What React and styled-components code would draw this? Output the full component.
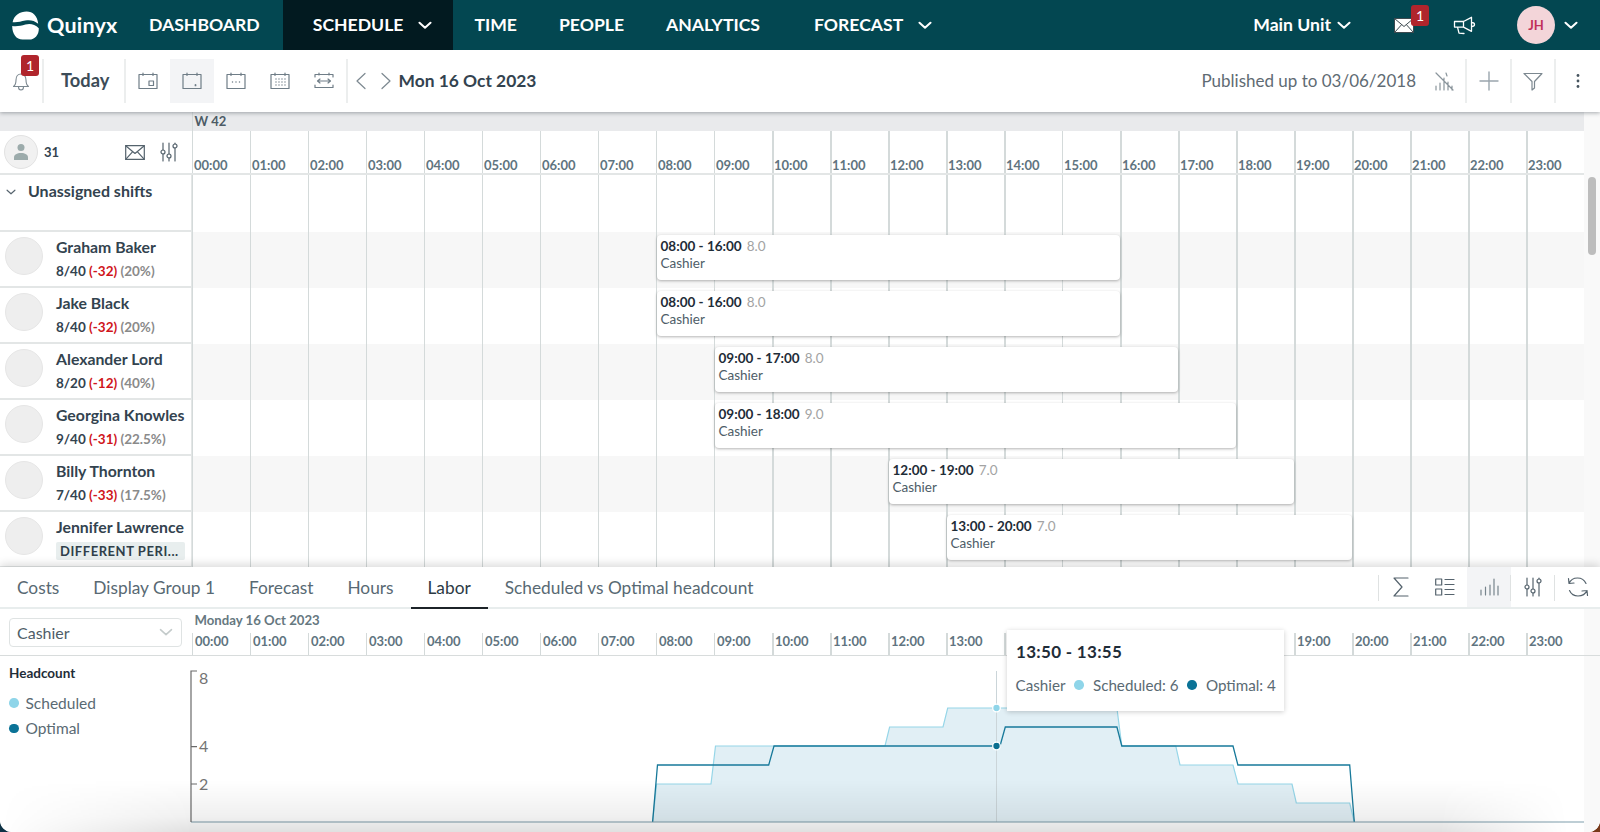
import React from 'react';
import styled, { createGlobalStyle } from 'styled-components';

const FONT = `Lato, "Noto Sans", sans-serif`;
const HOURS = Array.from({ length: 24 }, (_, i) => `${String(i).padStart(2, '0')}:00`);
const LINES = 'repeating-linear-gradient(to right, #d4dada 0 1.5px, transparent 1.5px 58px)';

const Global = createGlobalStyle`
  html, body { margin: 0; padding: 0; background: #fff; }
  * { box-sizing: border-box; }
`;

const Page = styled.div`
  width: 1600px; height: 832px; overflow: hidden;
  display: flex; flex-direction: column;
  font-family: ${FONT}; color: #33434f;
  background: linear-gradient(90deg, #0f3347 50%, #7a3a1a 50%);
`;

/* ---------- top navigation ---------- */
const TopNav = styled.header`
  height: 50px; flex: none; display: flex; align-items: stretch;
  background: #034751; color: #fff; position: relative; z-index: 4;
`;
const Brand = styled.div`
  width: 128px; display: flex; align-items: center; gap: 8px; padding-left: 12px;
`;
const BrandName = styled.span`
  font-size: 21.5px; font-weight: 700; letter-spacing: .2px; margin-bottom: 1px;
`;
const NavItem = styled.div`
  display: flex; align-items: center; gap: 15px;
  padding: 0 ${p => p.$right || 21}px 0 ${p => (p.$active ? '30px' : '21px')};
  margin-left: ${p => p.$left || 0}px;
  background: ${p => (p.$active ? '#021a20' : 'transparent')};
  font-size: 17.6px; font-weight: 700; white-space: nowrap;
`;
const NavWord = styled.span`
  margin-bottom: 2px;
`;
const NavRight = styled.div`
  margin-left: auto; display: flex; align-items: center; padding-right: 22px;
`;
const UnitLabel = styled.div`
  display: flex; align-items: center; gap: 6px; font-size: 17.6px; font-weight: 700; margin-right: 43px;
`;
const IconSlot = styled.div`
  position: relative; display: flex; align-items: center; margin-right: ${p => p.$right || 0}px;
`;
const Badge = styled.span`
  position: absolute; width: 18px; height: 21px; border-radius: 3px;
  top: ${p => p.$top}px; left: ${p => p.$left}px;
  background: #b0252c; color: #fff; font-size: 14px; font-weight: 400;
  display: flex; align-items: center; justify-content: center;
`;
const Avatar = styled.div`
  width: 38px; height: 38px; border-radius: 50%; background: #f3d5d9; color: #c0305a;
  display: flex; align-items: center; justify-content: center;
  font-size: 13px; font-weight: 700; margin-right: 9px;
`;

/* ---------- toolbar ---------- */
const Toolbar = styled.div`
  height: 62px; flex: none; display: flex; align-items: center; background: #fff;
  box-shadow: 0 1px 4px rgba(40, 50, 60, .4); position: relative; z-index: 3;
`;
const BellCell = styled.div`
  width: 44px; height: 44px; position: relative; display: flex; align-items: center; justify-content: center;
  border-right: 2px solid #eceeee;
`;
const TodayCell = styled.div`
  width: 81.5px; height: 44px; display: flex; align-items: center; justify-content: center;
  border-right: 2px solid #eceeee; font-size: 18.3px; font-weight: 700; color: #3c4c58; padding: 0 0 2px 3px;
`;
const ViewCell = styled.div`
  width: 44px; height: 44px; display: flex; align-items: center; justify-content: center;
  background: ${p => (p.$on ? '#f3f4f6' : 'transparent')};
`;
const ViewGroup = styled.div`
  display: flex; border-right: 2px solid #eceeee;
`;
const PagerGroup = styled.div`
  display: flex; align-items: center; gap: 13px; padding: 0 5px 0 7px;
`;
const DateLabel = styled.div`
  font-size: 17.4px; font-weight: 700; color: #33434f; margin: 0 0 2px 2px;
`;
const ToolRight = styled.div`
  margin-left: auto; display: flex; align-items: center;
`;
const Published = styled.div`
  font-size: 17px; color: #5f6b73; margin: 0 6px 2px 0;
`;
const ToolCell = styled.div`
  width: ${p => p.$w}px; height: 44px; display: flex; align-items: center; justify-content: center;
  border-right: ${p => (p.$line ? '2px solid #eceeee' : 'none')};
`;

/* ---------- schedule ---------- */
const SchedulePane = styled.section`
  flex: none; height: 455px; display: flex; background: #fff; overflow: hidden;
`;
const ScheduleMain = styled.div`
  width: 1584px; flex: none; display: flex; flex-direction: column;
`;
const ScrollTrack = styled.div`
  flex: 1; background: #f9f9f9; padding: 65px 4px 0;
`;
const ScrollThumb = styled.div`
  width: 8px; height: 78px; border-radius: 4px; background: #bdbdbd;
`;
const WeekRow = styled.div`
  height: 19px; flex: none; display: flex; background: #e9eaec;
`;
const WeekLabel = styled.div`
  margin-left: 191.5px; padding-left: 2px; font-size: 13px; font-weight: 700; line-height: 19px; color: #4d5c66;
  border-left: 1.5px solid #d4dada;
`;
const HeadRow = styled.div`
  height: 44px; flex: none; display: flex; border-bottom: 2px solid #e3e6e6;
`;
const HeadLeft = styled.div`
  width: 191.5px; flex: none; display: flex; align-items: center; padding-left: 4px; position: relative;
`;
const HeadAvatar = styled.div`
  width: 34px; height: 34px; border-radius: 50%; background: #f1f1f1; border: 1px solid #e2e2e2;
  display: flex; align-items: center; justify-content: center;
`;
const HeadCount = styled.span`
  font-size: 13px; font-weight: 700; margin-left: 6px; color: #33434f;
`;
const HeadTools = styled.div`
  margin-left: auto; display: flex; align-items: center; gap: 14px; padding-right: 13px;
`;
const HourStrip = styled.div`
  width: 1392px; display: grid; grid-template-columns: repeat(24, 58px);
  background-image: ${LINES};
`;
const HourLabel = styled.div`
  padding-left: ${p => (p.$low ? 3.5 : 2.5)}px; align-self: ${p => (p.$low ? 'center' : 'end')};
  margin-bottom: ${p => (p.$low ? 5 : -1)}px;
  font-size: 13px; font-weight: 700; color: #5f7480; line-height: 17px;
`;
const Row = styled.div`
  height: ${p => p.$h || 56}px; flex: none; display: flex;
`;
const PersonCell = styled.div`
  width: 191.5px; flex: none; display: flex; border-bottom: 2px solid #e3e6e6; border-right: 1.5px solid #e3e6e6; padding-left: 5px;
`;
const UnassignedCell = styled(PersonCell)`
  padding: 6px 0 0 6px; align-items: flex-start; gap: 12px;
  font-size: 16px; font-weight: 700; color: #33434f;
  svg { margin-top: 8px; }
`;
const Photo = styled.div`
  width: 38px; height: 38px; flex: none; margin-top: 5px; border-radius: 50%; background: #eeeeee; border: 1px solid #e6e6e6;
`;
const PersonText = styled.div`
  margin-left: 13px; min-width: 0; flex: 1; padding-top: 5px;
`;
const PersonName = styled.div`
  font-size: 15.8px; font-weight: 700; line-height: 19px; color: #33434f; white-space: nowrap;
`;
const PersonStats = styled.div`
  font-size: 13.5px; font-weight: 700; line-height: 17px; margin-top: 7px; color: #33434f; white-space: nowrap;
`;
const Deficit = styled.span`color: #d0151c;`;
const Share = styled.span`color: #8a8a8a;`;
const PeriodTag = styled.div`
  margin: 6px 6px 0 0; height: 18px; padding-left: 4px; background: #e8eeee; border-radius: 2px;
  font-size: 13px; font-weight: 700; line-height: 18px; letter-spacing: .55px; color: #2f3f4a; white-space: nowrap;
`;
const Timeline = styled.div`
  width: 1392px; flex: none; display: grid; grid-template-columns: repeat(24, 58px);
  background-color: ${p => (p.$shaded ? '#f7f7f7' : '#fff')};
  background-image: ${LINES};
`;
const ShiftCard = styled.div`
  grid-column: ${p => p.$from + 1} / ${p => p.$to + 1};
  margin: 3px 0 8px 1px; padding: 2px 4px; background: #fff; border-radius: 4px;
  box-shadow: 0 1px 3px rgba(0, 0, 0, .3);
`;
const ShiftTime = styled.div`
  font-size: 13.5px; font-weight: 700; line-height: 18px; color: #1f2d38; white-space: nowrap;
`;
const ShiftLen = styled.span`
  font-weight: 400; color: #a3a3a3; margin-left: 5px;
`;
const ShiftRole = styled.div`
  font-size: 13.5px; line-height: 17px; color: #4e5d68;
`;

/* ---------- bottom panel ---------- */
const Panel = styled.section`
  flex: 1; min-height: 0; position: relative; z-index: 2; background: #fff; display: flex; flex-direction: column;
  border-radius: 0 0 12px 12px; overflow: hidden;
  box-shadow: 0 -3px 8px rgba(0, 0, 0, .14);
  &::after {
    content: ''; position: absolute; left: 0; right: 0; bottom: 0; height: 52px; pointer-events: none;
    background: linear-gradient(to top, rgba(0, 0, 0, .12) 0, rgba(0, 0, 0, .06) 30%, rgba(0, 0, 0, 0) 100%);
    mask-image: linear-gradient(90deg, transparent 0, #000 12%, #000 90%, transparent 98%);
  }
`;
const TabBar = styled.div`
  height: 42px; flex: none; display: flex; border-bottom: 2px solid #e8eded;
`;
const Tab = styled.div`
  padding: 0 17px; height: 42px; display: flex; align-items: center;
  font-size: 17.3px; white-space: nowrap;
  color: ${p => (p.$on ? '#2c3a44' : '#586973')};
  border-bottom: ${p => (p.$on ? '2px solid #1c2328' : '2px solid transparent')};
`;
const TabTools = styled.div`
  margin-left: auto; display: flex; height: 40px; align-items: center;
`;
const TabTool = styled.div`
  width: ${p => p.$w}px; height: 40px; display: flex; align-items: center; justify-content: center; position: relative;
  background: ${p => (p.$on ? '#f3f4f6' : 'transparent')};
  &::after {
    content: ''; position: absolute; right: 0; top: 8px; bottom: 6px; width: 1.5px;
    background: ${p => (p.$line ? '#dfe2e2' : 'transparent')};
  }
`;
const ChartHead = styled.div`
  height: 47px; flex: none; display: flex; border-bottom: 1.5px solid #d8dcdc;
`;
const SelectBox = styled.div`
  width: 191.5px; flex: none; padding: 9px 10px 0 9px;
`;
const Select = styled.div`
  height: 29px; border: 1.5px solid #dfe3e3; border-radius: 4px; padding: 0 8px 0 7px;
  display: flex; align-items: center; justify-content: space-between;
  font-size: 16px; color: #4e5d68;
`;
const ChartTimes = styled.div`
  flex: none; width: 1392px; display: flex; flex-direction: column;
`;
const DayLabel = styled.div`
  height: 24px; padding: 3px 0 0 3px; font-size: 13.2px; font-weight: 700; color: #66787f; line-height: 17px;
`;
const ChartHours = styled(HourStrip)`
  height: 22px;
`;
const ChartBody = styled.div`
  flex: 1; min-height: 0; display: flex; background: #fff;
`;
const Legend = styled.div`
  width: 180px; flex: none; padding: 9px 0 0 9px;
`;
const LegendTitle = styled.div`
  font-size: 13.5px; font-weight: 700; line-height: 17px; color: #1f2d38; margin-bottom: 8px;
`;
const LegendItem = styled.div`
  display: flex; align-items: center; gap: 7px; height: 25.500px; font-size: 15.5px; color: #5a6a73;
`;
const Dot = styled.span`
  width: 9.500px; height: 9.500px; border-radius: 50%; flex: none; background: ${p => p.$c};
`;
const ChartSvg = styled.svg`
  width: 1404px; height: 176px; flex: none; display: block;
`;
const AxisText = styled.text`
  font-family: ${FONT}; font-size: 16px; fill: #747474;
`;
const Gutter = styled.div`
  flex: 1; background: #f9f9f9;
`;
const Tooltip = styled.div`
  position: absolute; left: 1007px; top: 63px; width: 277px; height: 81px; background: #fff; z-index: 3;
  box-shadow: 0 1px 5px rgba(0, 0, 0, .2); padding: 11px 9px 11px 8.500px;
`;
const TipTitle = styled.div`
  font-size: 17px; font-weight: 700; color: #1f2d38; line-height: 22px; letter-spacing: .3px; padding-left: .5px;
`;
const TipRow = styled.div`
  display: flex; align-items: center; margin-top: 13px; font-size: 15.2px; color: #5a6a73; white-space: nowrap;
`;
const TipGap = styled.span`
  margin: 0 9px; display: inline-flex;
`;

/* ---------- icons ---------- */
const Line = ({ w = 22, h = 20, vb, children, stroke = '#6f7d87', sw = 1.2 }) => (
  <svg width={w} height={h} viewBox={vb || `0 0 ${w} ${h}`} fill="none" stroke={stroke} strokeWidth={sw} strokeLinecap="round" strokeLinejoin="round">{children}</svg>
);
const Chevron = ({ size = 14, color = '#fff', sw = 2 }) => (
  <svg width={size} height={size * .6} viewBox="0 0 14 8" fill="none" stroke={color} strokeWidth={sw} strokeLinecap="round" strokeLinejoin="round"><path d="M1.5 1.5 7 6.5l5.5-5" /></svg>
);
const Logo = () => (
  <svg width="27" height="29" viewBox="0 0 27 29" fill="#fff">
    <path d="M.6 11.2C2 4.4 8 .6 14.6.6c6.4 0 10.8 4.4 11.6 12.2-4.2-3.6-8.6-4.2-13-3.2C8.800 10.600 4.600 11.800.6 11.200z" />
    <path d="M.2 15c4.200.8 9-.2 13.200-1.400 4.400-1.200 9.200-.6 13.400 3.600.2 6.800-4 11.400-9.600 11.400h-6.600C4.400 28.600.2 23 .2 15z" />
  </svg>
);
const MailSolid = () => (
  <svg width="20" height="15" viewBox="0 0 20 15" fill="#fff" stroke="#3d4a50" strokeWidth="1"><rect x=".5" y=".5" width="19" height="14" /><path d="M.5.500 10 8.500 19.500.5M.5 14.500 7.500 6.800M19.500 14.500 12.500 6.800" fill="none" /></svg>
);
const Megaphone = () => (
  <Line w={23} h={19} stroke="#fff" sw={1.3}><path d="M1.500 5.500h9l8-4.200v14l-8-4.200h-9zM10.500 5.500v5.600M18.500 6.500c2 0 3 1 3 2s-1 2-3 2M4.500 11.100l1.500 6 5 .4" /></Line>
);
const Bell = () => (
  <Line w={18} h={20} stroke="#7c8890" sw={1.1}><path d="M1.500 15.500c2-1.500 2.500-3.500 2.500-6.500 0-3.500 2-6 5-6s5 2.500 5 6c0 3 .500 5 2.500 6.500zM6.500 16c0 2 1 3 2.500 3s2.500-1 2.500-3" /></Line>
);
const CalBase = ({ children, side }) => (
  <Line w={20} h={18}>
    {side
      ? <path d="M1 5V2.500h18V5M1 13v2.500h18V13M5 1v2M15 1v2" />
      : <><rect x="1" y="2.500" width="18" height="14" /><path d="M5 1v2.500M15 1v2.500" /></>}
    {children}
  </Line>
);
const CalIcons = [
  <CalBase key="a"><rect x="11" y="9" width="4.500" height="4.500" /></CalBase>,
  <CalBase key="b"><path d="M13.500 13v.4" strokeWidth="1.800" /></CalBase>,
  <CalBase key="c"><path d="M6.500 10v.1M10 10v.1M13.500 10v.1" strokeWidth="1.500" /></CalBase>,
  <CalBase key="d"><path d="M6 7v.1M9 7v.1M12 7v.1M15 7v.1M6 10v.1M9 10v.1M12 10v.1M15 10v.1M6 13v.1M9 13v.1M12 13v.1M15 13v.1" strokeWidth="1.400" /></CalBase>,
  <CalBase key="e" side><path d="M3.500 9h13M6 7 3.500 9 6 11M14 7l2.500 2-2.500 2" /></CalBase>,
];
const Pager = ({ flip }) => (
  <Line w={12} h={18} stroke="#7c8890"><path d={flip ? 'M2 1.500 10 9l-8 7.500' : 'M10 1.500 2 9l8 7.500'} /></Line>
);
const NoBars = () => (
  <Line w={22} h={22} stroke="#8a959c" sw={1.2}><path d="M3 20v-4M7 20v-7M11 20V8M15 20v-8M19 20v-4M3 3l17 17M13 3l1 3" /></Line>
);
const PlusIcon = () => (
  <Line w={20} h={20} stroke="#9aa5ad" sw={1.4}><path d="M10 1v18M1 10h18" /></Line>
);
const FunnelIcon = () => (
  <Line w={20} h={19} stroke="#7c8890"><path d="M1 1.500h18l-7.500 8v6.500l-2.500 2v-8.500z" /></Line>
);
const DotsIcon = () => (
  <svg width="4" height="14" viewBox="0 0 4 14" fill="#46545e"><circle cx="2" cy="1.500" r="1.400" /><circle cx="2" cy="7" r="1.400" /><circle cx="2" cy="12.500" r="1.400" /></svg>
);
const Person = () => (
  <svg width="16" height="18" viewBox="0 0 16 18" fill="#9cabab"><circle cx="8" cy="4.500" r="3.500" /><path d="M1 17v-2.500C1 11.500 4 10 8 10s7 1.500 7 4.500V17z" /></svg>
);
const MailLine = () => (
  <Line w={20} h={15} stroke="#55636d"><rect x=".7" y=".7" width="18.600" height="13.600" /><path d="M.7.700 10 8.500 19.300.7M.7 14.300 7.500 6.800M19.300 14.300 12.500 6.800" /></Line>
);
const Sliders = () => (
  <Line w={20} h={20} stroke="#55636d"><path d="M4 1v7M4 12v7M10 1v11M10 16v3M16 1v1M16 6v13" /><circle cx="4" cy="10" r="2" /><circle cx="10" cy="14" r="2" /><circle cx="16" cy="4" r="2" /></Line>
);
const SigmaIcon = () => (
  <Line w={16} h={20} stroke="#55636d"><path d="M15 1H1l8 9-8 9h14" /></Line>
);
const ListIcon = () => (
  <Line w={20} h={18} stroke="#55636d"><rect x=".7" y="1" width="6" height="6" /><rect x=".7" y="11" width="6" height="6" /><path d="M10 1.500h9M10 6.500h9M10 11.500h9M10 16.500h9" /></Line>
);
const BarsIcon = () => (
  <Line w={20} h={18} stroke="#77848d"><path d="M2 17v-5M6.500 17v-8M11 17V7M15 17V1M19 17V8" /></Line>
);
const RefreshIcon = () => (
  <Line w={22} h={20} stroke="#55636d"><path d="M2 6.500C3.500 3 6.800 1 10.500 1c3.800 0 7 2.200 8.500 5.500M20 13.500c-1.500 3.500-5 5.500-9 5.500-3.800 0-7-2.200-8.500-5.500M1.500 1.500 2 6.500l5-.5M20.500 18.500l-.5-5-5 .5" /></Line>
);

/* ---------- chart ---------- */
const BASE = 822;
const UNIT = 19;
const toPoints = pts => pts.map(([x, v]) => `${x},${BASE - v * UNIT}`).join(' ');
const scheduled = [[652.6, 0], [656.6, 2], [711, 2], [715.5, 4], [885, 4], [889.6, 5], [943, 5], [947.7, 6], [1116.9, 6], [1121.8, 4], [1175.8, 4], [1180, 3], [1233, 3], [1238, 2], [1292, 2], [1296.3, 1], [1349.7, 1], [1354.3, 0]];
const optimal = [[652.6, 0], [657.5, 3], [768.7, 3], [774, 4], [1000, 4], [1005.3, 5], [1116.9, 5], [1121.8, 4], [1233, 4], [1237.9, 3], [1349.7, 3], [1354.3, 0]];

const Chart = () => (
  <ChartSvg viewBox="180 656 1404 176">
    <polygon points={toPoints(scheduled)} fill="#e1eff5" />
    <polyline points={toPoints(scheduled)} fill="none" stroke="#96d6e8" strokeWidth="1.200" />
    <line x1="996.500" x2="996.500" y1="671" y2="822" stroke="#cbd5d9" />
    <polyline points={toPoints(optimal)} fill="none" stroke="#17799a" strokeWidth="1.300" />
    <line x1="191" x2="1584" y1="822" y2="822" stroke="#7f9dab" strokeWidth="1.200" />
    <path d="M197 671h-6v151M191 746.700h6M191 784h6" fill="none" stroke="#6a6a6a" strokeWidth="1.200" />
    <AxisText x="199" y="684">8</AxisText>
    <AxisText x="199" y="752">4</AxisText>
    <AxisText x="199" y="790">2</AxisText>
    <circle cx="996.500" cy="708" r="3.800" fill="#8fd5e9" stroke="#fff" strokeWidth="1.300" />
    <circle cx="996.500" cy="746" r="3.800" fill="#0b6f90" stroke="#fff" strokeWidth="1.300" />
  </ChartSvg>
);

const people = [
  { name: 'Graham Baker', stats: ['8/40', '(-32)', '(20%)'], from: 8, to: 16, time: '08:00 - 16:00', len: '8.0' },
  { name: 'Jake Black', stats: ['8/40', '(-32)', '(20%)'], from: 8, to: 16, time: '08:00 - 16:00', len: '8.0' },
  { name: 'Alexander Lord', stats: ['8/20', '(-12)', '(40%)'], from: 9, to: 17, time: '09:00 - 17:00', len: '8.0' },
  { name: 'Georgina Knowles', stats: ['9/40', '(-31)', '(22.5%)'], from: 9, to: 18, time: '09:00 - 18:00', len: '9.0' },
  { name: 'Billy Thornton', stats: ['7/40', '(-33)', '(17.5%)'], from: 12, to: 19, time: '12:00 - 19:00', len: '7.0' },
  { name: 'Jennifer Lawrence', tag: 'DIFFERENT PERI...', from: 13, to: 20, time: '13:00 - 20:00', len: '7.0' },
];
const tabs = ['Costs', 'Display Group 1', 'Forecast', 'Hours', 'Labor', 'Scheduled vs Optimal headcount'];

export default function App() {
  return (
    <Page>
      <Global />
      <TopNav>
        <Brand><Logo /><BrandName>Quinyx</BrandName></Brand>
        <NavItem $right={23}><NavWord>DASHBOARD</NavWord></NavItem>
        <NavItem $active><NavWord>SCHEDULE</NavWord> <Chevron /></NavItem>
        <NavItem><NavWord>TIME</NavWord></NavItem>
        <NavItem><NavWord>PEOPLE</NavWord></NavItem>
        <NavItem><NavWord>ANALYTICS</NavWord></NavItem>
        <NavItem $left={12}><NavWord>FORECAST</NavWord> <Chevron /></NavItem>
        <NavRight>
          <UnitLabel><NavWord>Main Unit</NavWord> <Chevron /></UnitLabel>
          <IconSlot $right={39}><MailSolid /><Badge $top={-13} $left={17}>1</Badge></IconSlot>
          <IconSlot $right={41}><Megaphone /></IconSlot>
          <Avatar>JH</Avatar>
          <Chevron />
        </NavRight>
      </TopNav>

      <Toolbar>
        <BellCell><Bell /><Badge $top={-4} $left={21}>1</Badge></BellCell>
        <TodayCell>Today</TodayCell>
        <ViewGroup>
          {CalIcons.map((icon, i) => <ViewCell key={i} $on={i === 1}>{icon}</ViewCell>)}
        </ViewGroup>
        <PagerGroup><Pager /><Pager flip /></PagerGroup>
        <DateLabel>Mon 16 Oct 2023</DateLabel>
        <ToolRight>
          <Published>Published up to 03/06/2018</Published>
          <ToolCell $w={45} $line><NoBars /></ToolCell>
          <ToolCell $w={45} $line><PlusIcon /></ToolCell>
          <ToolCell $w={44} $line><FunnelIcon /></ToolCell>
          <ToolCell $w={44}><DotsIcon /></ToolCell>
        </ToolRight>
      </Toolbar>

      <SchedulePane>
        <ScheduleMain>
          <WeekRow><WeekLabel>W 42</WeekLabel></WeekRow>
          <HeadRow>
            <HeadLeft>
              <HeadAvatar><Person /></HeadAvatar>
              <HeadCount>31</HeadCount>
              <HeadTools><MailLine /><Sliders /></HeadTools>
            </HeadLeft>
            <HourStrip>{HOURS.map(h => <HourLabel key={h}>{h}</HourLabel>)}</HourStrip>
          </HeadRow>
          <Row $h={57}>
            <UnassignedCell><Chevron size={10} color="#55636d" sw={1.600} /> <span>Unassigned shifts</span></UnassignedCell>
            <Timeline />
          </Row>
          {people.map((p, i) => (
            <Row key={p.name}>
              <PersonCell>
                <Photo />
                <PersonText>
                  <PersonName>{p.name}</PersonName>
                  {p.tag
                    ? <PeriodTag>{p.tag}</PeriodTag>
                    : <PersonStats>{p.stats[0]} <Deficit>{p.stats[1]}</Deficit> <Share>{p.stats[2]}</Share></PersonStats>}
                </PersonText>
              </PersonCell>
              <Timeline $shaded={i % 2 === 0}>
                <ShiftCard $from={p.from} $to={p.to}>
                  <ShiftTime>{p.time}<ShiftLen>{p.len}</ShiftLen></ShiftTime>
                  <ShiftRole>Cashier</ShiftRole>
                </ShiftCard>
              </Timeline>
            </Row>
          ))}
        </ScheduleMain>
        <ScrollTrack><ScrollThumb /></ScrollTrack>
      </SchedulePane>

      <Panel>
        <TabBar>
          {tabs.map(t => <Tab key={t} $on={t === 'Labor'}>{t}</Tab>)}
          <TabTools>
            <TabTool $w={1.5} $line />
            <TabTool $w={44}><SigmaIcon /></TabTool>
            <TabTool $w={44}><ListIcon /></TabTool>
            <TabTool $w={44} $on $line><BarsIcon /></TabTool>
            <TabTool $w={44} $line><Sliders /></TabTool>
            <TabTool $w={45}><RefreshIcon /></TabTool>
          </TabTools>
        </TabBar>
        <ChartHead>
          <SelectBox>
            <Select>Cashier <Chevron size={14} color="#c4cbcb" sw={1.600} /></Select>
          </SelectBox>
          <ChartTimes>
            <DayLabel>Monday 16 Oct 2023</DayLabel>
            <ChartHours>
              {HOURS.map((h, i) => <HourLabel key={h} $low>{i >= 14 && i <= 18 ? '' : h}</HourLabel>)}
            </ChartHours>
          </ChartTimes>
          <Gutter />
        </ChartHead>
        <ChartBody>
          <Legend>
            <LegendTitle>Headcount</LegendTitle>
            <LegendItem><Dot $c="#8fd5e9" />Scheduled</LegendItem>
            <LegendItem><Dot $c="#0b7397" />Optimal</LegendItem>
          </Legend>
          <Chart />
          <Gutter />
        </ChartBody>
        <Tooltip>
          <TipTitle>13:50 - 13:55</TipTitle>
          <TipRow>
            Cashier<TipGap><Dot $c="#8fd5e9" /></TipGap>Scheduled: 6<TipGap><Dot $c="#0b7397" /></TipGap>Optimal: 4
          </TipRow>
        </Tooltip>
      </Panel>
    </Page>
  );
}
